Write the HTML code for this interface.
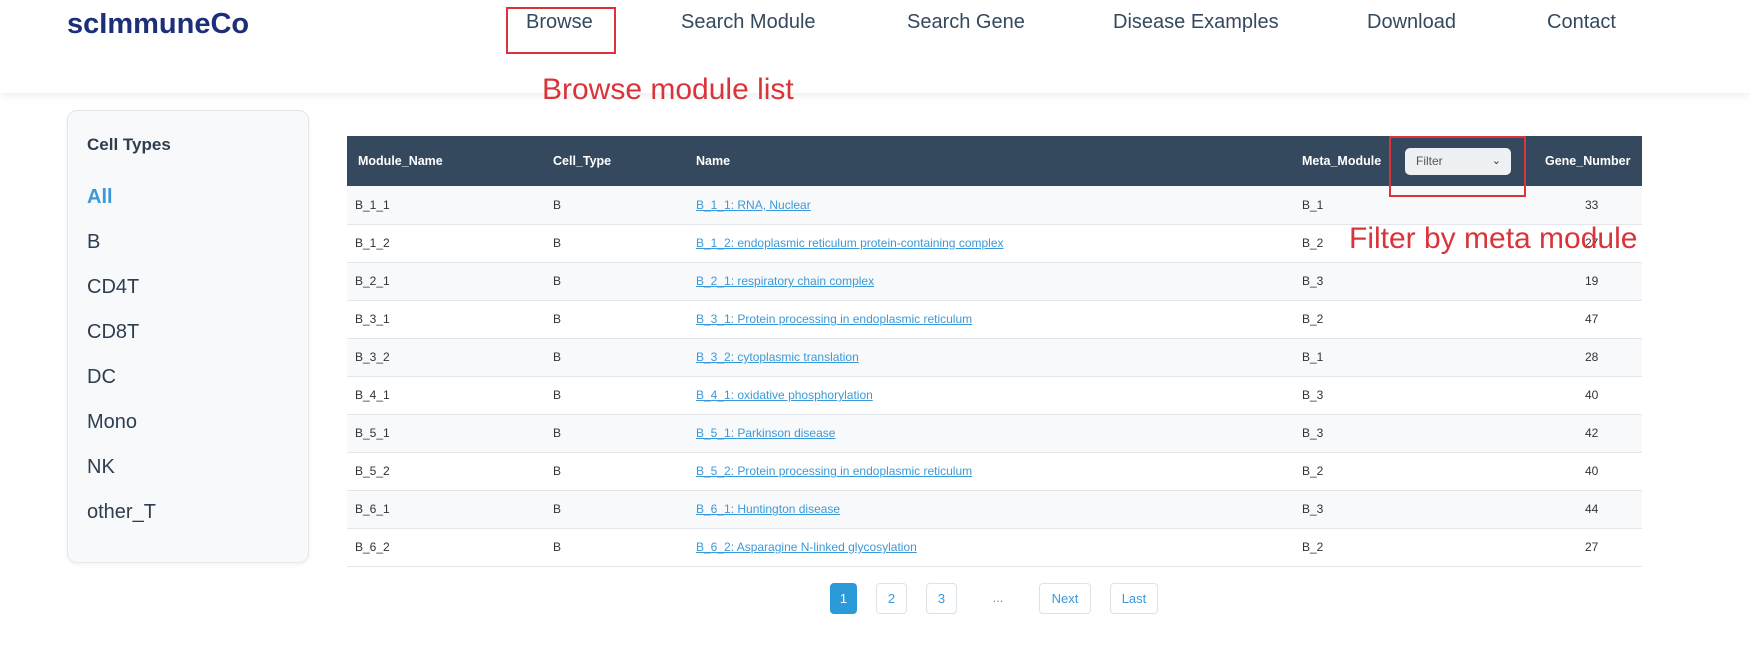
<!DOCTYPE html>
<html><head><meta charset="utf-8"><style>
*{margin:0;padding:0;box-sizing:border-box}
body{width:1750px;height:645px;background:#fff;font-family:"Liberation Sans",sans-serif;position:relative;overflow:hidden;color:#2c3e50}
.hdr{position:absolute;left:0;top:0;width:1750px;height:93px;background:#fff;box-shadow:0 2px 8px rgba(0,0,0,.08)}
.logo{position:absolute;left:67px;top:8px;font-size:29px;font-weight:bold;color:#1c2f78}
.nav{position:absolute;top:11px;font-size:20px;color:#34495e}
.ann{position:absolute;color:#d9343a;font-size:30px}
.rbox{position:absolute;border:2px solid #d9343a}
.side{position:absolute;left:67px;top:110px;width:242px;height:453px;border:1px solid #e3e6ea;border-radius:10px;background:#f8f9fb;box-shadow:0 2px 6px rgba(0,0,0,.05)}
.side div{position:absolute;left:19px;font-size:20px;color:#2c3e50}
table{position:absolute;left:347px;top:136px;width:1295px;border-collapse:collapse;font-size:12px;table-layout:fixed}
th{background:#34495e;color:#fff;height:50px;text-align:left;font-size:12.5px;font-weight:bold;white-space:nowrap;overflow:visible}
td{height:38px;border-bottom:1px solid #e3e6ea;color:#333;white-space:nowrap}
tr:nth-child(even) td{background:#f8f9fb}
td a{color:#3a9ad9;text-decoration:underline}
td.n{padding-left:40px}
.pg{position:absolute;top:583px;height:31px;border:1px solid #dee2e6;border-radius:4px;font-size:13px;color:#3a9ad9;text-align:center;line-height:29px}
</style></head><body>
<div class="hdr"></div>
<div class="logo">scImmuneCo</div>
<div class="nav" style="left:526px">Browse</div>
<div class="nav" style="left:681px">Search Module</div>
<div class="nav" style="left:907px">Search Gene</div>
<div class="nav" style="left:1113px">Disease Examples</div>
<div class="nav" style="left:1367px">Download</div>
<div class="nav" style="left:1547px">Contact</div>
<div class="rbox" style="left:506px;top:7px;width:110px;height:47px"></div>
<div class="ann" style="left:542px;top:73px">Browse module list</div>
<div class="side">
<div style="top:24px;font-size:17px;font-weight:bold">Cell Types</div>
<div style="top:75px;color:#3a9ad9;font-weight:bold">All</div>
<div style="top:120px">B</div>
<div style="top:165px">CD4T</div>
<div style="top:210px">CD8T</div>
<div style="top:255px">DC</div>
<div style="top:300px">Mono</div>
<div style="top:345px">NK</div>
<div style="top:390px">other_T</div>
</div>
<table>
<colgroup><col style="width:206px"><col style="width:143px"><col style="width:606px"><col style="width:106px"><col style="width:137px"><col style="width:97px"></colgroup>
<tr><th style="padding-left:11px">Module_Name</th><th>Cell_Type</th><th>Name</th><th>Meta_Module</th><th><div style="margin-left:-3px;width:106px;height:27px;background:#eef0f3;border-radius:5px;color:#555;font-weight:normal;font-size:12px;line-height:27px;padding-left:11px;position:relative">Filter<span style="position:absolute;right:10px;top:0;font-size:11px;color:#333">&#8964;</span></div></th><th>Gene_Number</th></tr>
<tr><td style="padding-left:8px">B_1_1</td><td>B</td><td><a>B_1_1: RNA, Nuclear</a></td><td>B_1</td><td></td><td class="n">33</td></tr>
<tr><td style="padding-left:8px">B_1_2</td><td>B</td><td><a>B_1_2: endoplasmic reticulum protein-containing complex</a></td><td>B_2</td><td></td><td class="n">27</td></tr>
<tr><td style="padding-left:8px">B_2_1</td><td>B</td><td><a>B_2_1: respiratory chain complex</a></td><td>B_3</td><td></td><td class="n">19</td></tr>
<tr><td style="padding-left:8px">B_3_1</td><td>B</td><td><a>B_3_1: Protein processing in endoplasmic reticulum</a></td><td>B_2</td><td></td><td class="n">47</td></tr>
<tr><td style="padding-left:8px">B_3_2</td><td>B</td><td><a>B_3_2: cytoplasmic translation</a></td><td>B_1</td><td></td><td class="n">28</td></tr>
<tr><td style="padding-left:8px">B_4_1</td><td>B</td><td><a>B_4_1: oxidative phosphorylation</a></td><td>B_3</td><td></td><td class="n">40</td></tr>
<tr><td style="padding-left:8px">B_5_1</td><td>B</td><td><a>B_5_1: Parkinson disease</a></td><td>B_3</td><td></td><td class="n">42</td></tr>
<tr><td style="padding-left:8px">B_5_2</td><td>B</td><td><a>B_5_2: Protein processing in endoplasmic reticulum</a></td><td>B_2</td><td></td><td class="n">40</td></tr>
<tr><td style="padding-left:8px">B_6_1</td><td>B</td><td><a>B_6_1: Huntington disease</a></td><td>B_3</td><td></td><td class="n">44</td></tr>
<tr><td style="padding-left:8px">B_6_2</td><td>B</td><td><a>B_6_2: Asparagine N-linked glycosylation</a></td><td>B_2</td><td></td><td class="n">27</td></tr>
</table>
<div class="rbox" style="left:1389px;top:136px;width:137px;height:61px"></div>
<div class="ann" style="left:1349px;top:222px">Filter by meta module</div>
<div class="pg" style="left:830px;width:27px;background:#2a9ad8;color:#fff;border-color:#2a9ad8">1</div>
<div class="pg" style="left:876px;width:31px">2</div>
<div class="pg" style="left:926px;width:31px">3</div>
<div class="pg" style="left:985px;width:26px;border:none;color:#888">...</div>
<div class="pg" style="left:1039px;width:52px">Next</div>
<div class="pg" style="left:1110px;width:48px">Last</div>
</body></html>
